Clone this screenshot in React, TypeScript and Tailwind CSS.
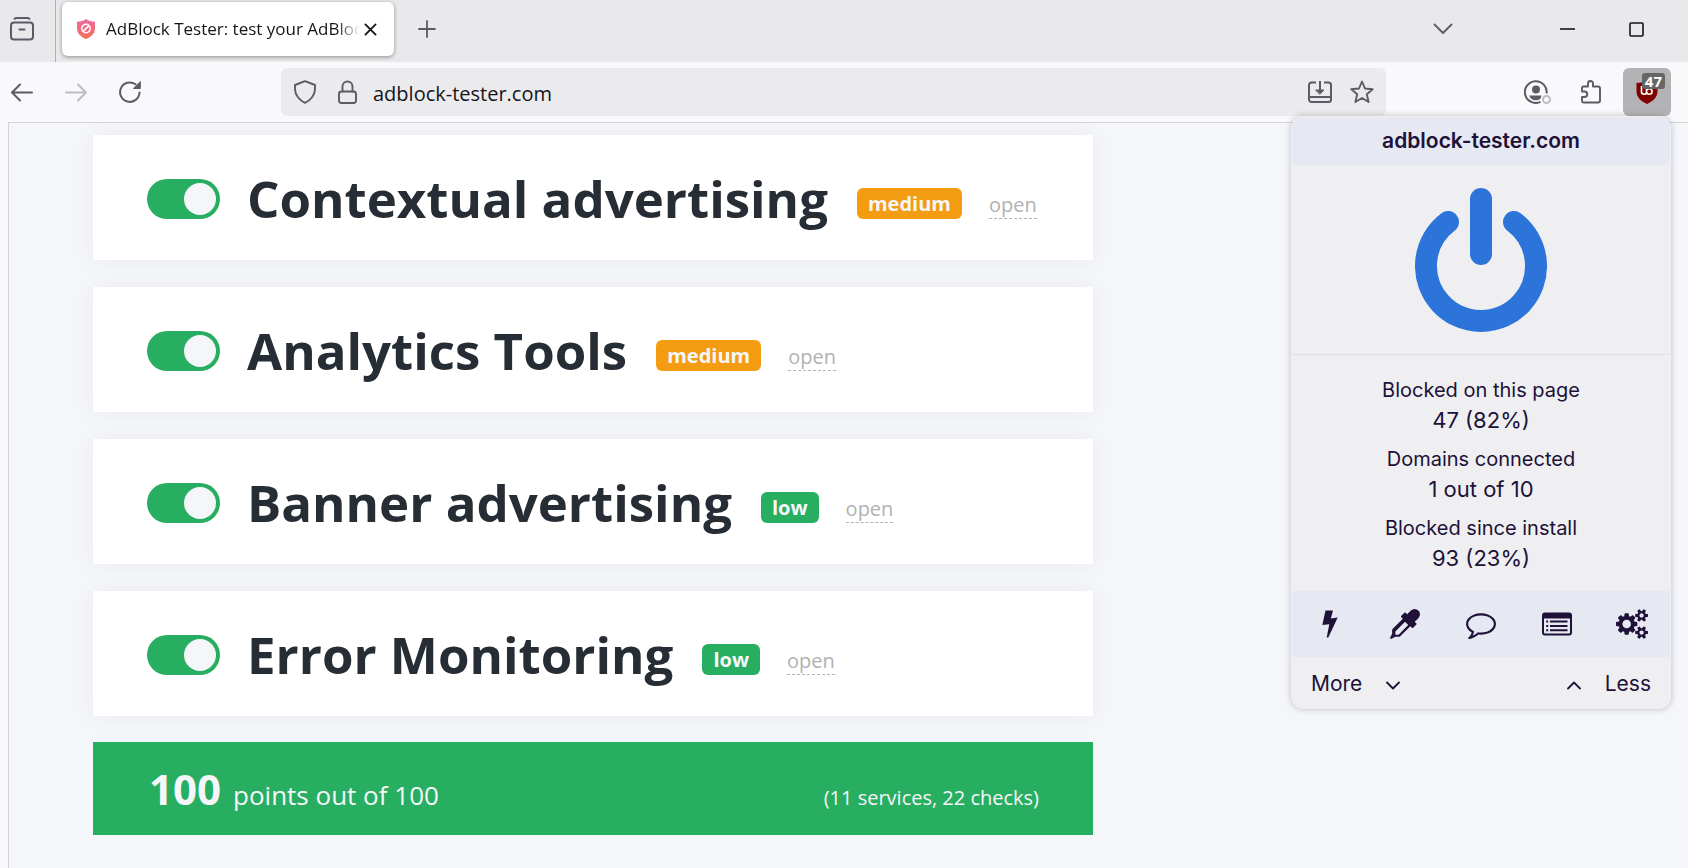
import type { ReactNode } from "react";

type Level = "medium" | "low";

const services: { id: string; title: string; level: Level }[] = [
  { id: "contextual", title: "Contextual advertising", level: "medium" },
  { id: "analytics", title: "Analytics Tools", level: "medium" },
  { id: "banner", title: "Banner advertising", level: "low" },
  { id: "errors", title: "Error Monitoring", level: "low" },
];

const levelColor: Record<Level, string> = {
  medium: "bg-[#f39c12]",
  low: "bg-[#27ae60]",
};

const stats = [
  { label: "Blocked on this page", value: "47 (82%)" },
  { label: "Domains connected", value: "1 out of 10" },
  { label: "Blocked since install", value: "93 (23%)" },
];

function Line({ children, box = "0 0 24 24", className = "size-6", width = 2 }: { children: ReactNode; box?: string; className?: string; width?: number }) {
  return (
    <svg viewBox={box} className={`shrink-0 ${className}`} fill="none" stroke="currentColor" strokeWidth={width} strokeLinecap="round" strokeLinejoin="round" aria-hidden="true">
      {children}
    </svg>
  );
}

function Solid({ d, box = "0 0 1792 1792", className = "size-[30px]" }: { d: string; box?: string; className?: string }) {
  return (
    <svg viewBox={box} className={`shrink-0 ${className}`} fill="currentColor" aria-hidden="true">
      <path d={d} />
    </svg>
  );
}

const eyedropper =
  "M1698 94q94 94 94 226.5t-94 225.5l-225 223 104 104q10 10 10 23t-10 23l-210 210q-10 10-23 10t-23-10l-105-105-603 603q-37 37-90 37h-203l-256 128-64-64 128-256v-203q0-53 37-90l603-603-105-105q-10-10-10-23t10-23l210-210q10-10 23-10t23 10l104 104 223-225q93-94 225.5-94t226.5 94zm-1186 1442l576-576-192-192-576 576v192h192z";
const comment =
  "M896 384q-204 0-381.5 69.5t-282 187.5-104.5 255q0 112 71.5 213.5t201.5 175.5l87 50-27 96q-24 91-70 172 152-63 275-171l43-38 57 6q69 8 130 8 204 0 381.5-69.5t282-187.5 104.5-255-104.5-255-282-187.5-381.5-69.5zm896 512q0 174-120 321.5t-326 233-450 85.5q-70 0-145-8-198 175-460 242-49 14-114 22h-5q-15 0-27-10.5t-16-27.5v-1q-3-4-.5-12t2-10 4.5-9.5l6-9 7-8.5 8-9q7-8 31-34.5t34.5-38 31-39.5 32.5-51 27-59 26-76q-157-89-247.5-220t-90.5-281q0-174 120-321.5t326-233 450-85.5 450 85.5 326 233 120 321.5z";
const cogs =
  "M896 896q0-106-75-181t-181-75-181 75-75 181 75 181 181 75 181-75 75-181zm768 512q0-52-38-90t-90-38-90 38-38 90q0 53 37.5 90.5t90.5 37.5 90.5-37.5 37.5-90.5zm0-1024q0-52-38-90t-90-38-90 38-38 90q0 53 37.5 90.5t90.5 37.5 90.5-37.5 37.5-90.5zm-384 421v185q0 10-7 19.5t-16 10.5l-155 24q-11 35-32 76 34 48 90 115 7 11 7 20 0 12-7 19-23 30-82.5 89.5t-78.5 59.5q-11 0-21-7l-115-90q-37 19-77 31-11 108-23 155-7 24-30 24h-186q-11 0-20-7.5t-10-17.5l-23-153q-34-10-75-31l-118 89q-7 7-20 7-11 0-21-8-144-133-144-160 0-9 7-19 10-14 41-53t47-61q-23-44-35-82l-152-24q-10-1-17-9.5t-7-19.5v-185q0-10 7-19.5t16-10.5l155-24q11-35 32-76-34-48-90-115-7-11-7-20 0-12 7-20 22-30 82-89t79-59q11 0 21 7l115 90q34-18 77-32 11-108 23-154 7-24 30-24h186q11 0 20 7.5t10 17.5l23 153q34 10 75 31l118-89q8-7 20-7 11 0 21 8 144 133 144 160 0 8-7 19-12 16-42 54t-45 60q23 48 34 82l152 23q10 2 17 10.5t7 19.5zm640 533v140q0 16-149 31-12 27-30 52 51 113 51 138 0 4-4 7-122 71-124 71-8 0-46-47t-52-68q-20 2-30 2t-30-2q-14 21-52 68t-46 47q-2 0-124-71-4-3-4-7 0-25 51-138-18-25-30-52-149-15-149-31v-140q0-16 149-31 13-29 30-52-51-113-51-138 0-4 4-7 4-2 35-20t59-34 30-16q8 0 46 46.5t52 67.5q20-2 30-2t30 2q51-71 92-112l6-2q4 0 124 70 4 3 4 7 0 25-51 138 17 23 30 52 149 15 149 31zm0-1024v140q0 16-149 31-12 27-30 52 51 113 51 138 0 4-4 7-122 71-124 71-8 0-46-47t-52-68q-20 2-30 2t-30-2q-14 21-52 68t-46 47q-2 0-124-71-4-3-4-7 0-25 51-138-18-25-30-52-149-15-149-31v-140q0-16 149-31 13-29 30-52-51-113-51-138 0-4 4-7 4-2 35-20t59-34 30-16q8 0 46 46.5t52 67.5q20-2 30-2t30 2q51-71 92-112l6-2q4 0 124 70 4 3 4 7 0 25-51 138 17 23 30 52 149 15 149 31z";

function TabStrip() {
  return (
    <header className="flex h-[62px] items-stretch bg-[#e9e9eb] text-[#5b5b66]">
      <div className="flex w-14 items-center border-r border-[#aeaeb4] pb-1 pl-[10px]">
        <button type="button" aria-label="Recent browsing">
          <Line>
            <path d="M4.500 1.800C5.200 1 6 1 7 1h10c1 0 1.800 0 2.500.8" />
            <rect x="1" y="5.500" width="22" height="17" rx="3" />
            <path d="M9.500 12.500h5" />
          </Line>
        </button>
      </div>
      <div className="flex flex-1 items-center pb-1 pl-[6px] pr-11">
        <div className="flex h-[54px] w-[332px] items-center rounded-md bg-white pl-[15px] pr-[17px] shadow-[0_1px_4px_rgba(0,0,0,0.4)]">
          <svg viewBox="0 0 18 20" className="h-5 w-[18px] shrink-0" aria-hidden="true">
            <defs>
              <linearGradient id="favicon" x1="0" y1="0" x2="0" y2="1">
                <stop offset="0" stopColor="#ec6aa0" />
                <stop offset="1" stopColor="#f4705a" />
              </linearGradient>
            </defs>
            <path d="M9 0c2.500 1.900 5.500 2.700 9 2.800v6.700c0 5-4 8.500-9 10.500C4 18 0 14.500 0 9.500V2.800C3.500 2.700 6.500 1.900 9 0z" fill="url(#favicon)" />
            <circle cx="9" cy="9.500" r="4.200" fill="none" stroke="#fff" strokeWidth="1.500" />
            <path d="M6.100 12.400l5.800-5.800" stroke="#fff" strokeWidth="1.500" />
          </svg>
          <span className="ml-[11px] min-w-0 flex-1 overflow-hidden whitespace-nowrap text-[17px] leading-6 text-[#15141a] [mask-image:linear-gradient(to_left,transparent,black_24px)]">
            AdBlock Tester: test your AdBloc
          </span>
          <button type="button" aria-label="Close tab" className="ml-1 text-[#15141a]">
            <Line box="0 0 14 14" className="size-[13px]">
              <path d="M1.500 1.500l11 11M12.500 1.500l-11 11" />
            </Line>
          </button>
        </div>
        <button type="button" aria-label="New tab" className="ml-6">
          <Line box="0 0 18 18" className="size-[18px]" width={1.8}>
            <path d="M9 1v16M1 9h16" />
          </Line>
        </button>
        <button type="button" aria-label="List all tabs" className="ml-auto mr-[107px]">
          <Line box="0 0 20 12" className="h-3 w-5" width={1.8}>
            <path d="M1.500 1.500L10 10l8.500-8.500" />
          </Line>
        </button>
        <button type="button" aria-label="Minimize" className="mr-[54px] text-[#15141a]">
          <Line box="0 0 15 15" className="size-[15px]">
            <path d="M0 7h15" strokeWidth="1.600" strokeLinecap="butt" />
          </Line>
        </button>
        <button type="button" aria-label="Maximize" className="text-[#15141a]">
          <Line box="0 0 15 15" className="size-[15px]" width={1.6}>
            <rect x="1" y="1" width="13" height="13" rx="1" />
          </Line>
        </button>
      </div>
    </header>
  );
}

function BlockerPanel() {
  return (
    <section
      aria-label="Content blocker"
      className="absolute right-0 top-full z-10 w-[380px] overflow-hidden rounded-xl border border-[#f0f0f2] bg-[#efeff1] font-['Inter',sans-serif] text-[#201139] shadow-[0_0_6px_rgba(60,60,80,0.3)]"
    >
      <h2 className="bg-[#e6e9f2] text-center text-[21px] font-semibold leading-[48px]">adblock-tester.com</h2>
      <div className="flex justify-center border-b border-[#e0e0e4] pb-[22px] pt-[23px]">
        <button type="button" aria-label="Turn blocking off for this site" className="text-[#2d74da]">
          <Line box="0 0 132 144" className="h-36 w-[132px]" width={22}>
            <path d="M66 11v55" />
            <path d="M99 34a55 55 0 1 1-66 0" />
          </Line>
        </button>
      </div>
      <dl className="flex flex-col gap-[9px] pb-[18px] pt-5 text-center leading-[30px]">
        {stats.map((s) => (
          <div key={s.label}>
            <dt className="text-[20px]">{s.label}</dt>
            <dd className="text-[22px]">{s.value}</dd>
          </div>
        ))}
      </dl>
      <div className="grid h-[66px] grid-cols-5 items-center justify-items-center bg-[#e6e9f2]">
        <button type="button" aria-label="Zap an element">
          <svg viewBox="0 0 16 28" className="h-7 w-4" fill="currentColor" aria-hidden="true">
            <path d="M3.500 0.500h7.500L8.800 8.500l6.900-1L6.300 27.500H4.700L7.300 14.200 0.300 15z" />
          </svg>
        </button>
        <button type="button" aria-label="Pick an element">
          <Solid d={eyedropper} />
        </button>
        <button type="button" aria-label="Report an issue">
          <Solid d={comment} />
        </button>
        <button type="button" aria-label="Open the logger">
          <svg viewBox="0 0 30 24" className="h-6 w-[30px]" fill="currentColor" aria-hidden="true">
            <path fillRule="evenodd" d="M3 0.500h24a3 3 0 0 1 3 3v17a3 3 0 0 1-3 3H3a3 3 0 0 1-3-3v-17a3 3 0 0 1 3-3zM2 6.500v14a1 1 0 0 0 1 1h24a1 1 0 0 0 1-1v-14z" />
            <path d="M4.200 8.500h2v2h-2zM4.200 13h2v2h-2zM4.200 17.300h2v2h-2zM8 8.500h17.500v2H8zM8 13h17.500v2H8zM8 17.300h17.500v2H8z" />
          </svg>
        </button>
        <button type="button" aria-label="Open the dashboard">
          <Solid d={cogs} box="0 0 1920 1792" className="h-[30px] w-8" />
        </button>
      </div>
      <div className="flex items-center justify-between px-[19px] pt-[2px] text-[21px] leading-[49px]">
        <button type="button" className="flex items-center gap-6">
          More
          <Line box="0 0 14 9" className="mt-1 h-[9px] w-[14px]" width={1.8}>
            <path d="M1 1.500l6 6 6-6" />
          </Line>
        </button>
        <button type="button" className="flex items-center gap-6">
          <Line box="0 0 14 9" className="mt-1 h-[9px] w-[14px]" width={1.8}>
            <path d="M1 7.500l6-6 6 6" />
          </Line>
          Less
        </button>
      </div>
    </section>
  );
}

function Toolbar() {
  return (
    <nav aria-label="Navigation" className="flex h-[60px] items-center bg-[#f9f9fb] pl-[10px] pr-[17px] text-[#5b5b66]">
      <button type="button" aria-label="Back">
        <Line>
          <path d="M22 12.500H2M10 4.500l-8 8 8 8" />
        </Line>
      </button>
      <button type="button" aria-label="Forward" disabled className="ml-[30px] text-[#bcbcc1]">
        <Line>
          <path d="M2 12.500h20M14 4.500l8 8-8 8" />
        </Line>
      </button>
      <button type="button" aria-label="Reload" className="ml-[30px]">
        <Line>
          <path d="M21.500 12.500A9.700 9.700 0 1 1 17.500 4.300" />
          <path d="M22.300 2v6.500h-6.500z" fill="currentColor" strokeWidth="1" />
        </Line>
      </button>
      <div className="ml-[139px] flex h-12 flex-1 items-center rounded-md bg-[#ebebed] pl-3 pr-3">
        <Line width={1.9}>
          <path d="M12 1.200L22 5v4c0 6-4.500 11.500-10 13.800C6.500 20.500 2 15 2 9V5z" />
        </Line>
        <Line className="ml-[18px] size-6" width={1.9}>
          <rect x="4" y="11.500" width="17" height="11.500" rx="2.500" />
          <path d="M7.500 11.500V6.500a5 5 0 0 1 10 0v5" />
        </Line>
        <input
          type="text"
          aria-label="Address"
          defaultValue="adblock-tester.com"
          className="ml-[14px] min-w-0 flex-1 bg-transparent pt-[3px] text-[20px] leading-7 text-[#15141a] outline-none"
        />
        <button type="button" aria-label="Install site">
          <Line>
            <path d="M8 2.500H3.500A2.500 2.500 0 0 0 1 5v14.500A2.500 2.500 0 0 0 3.500 22h17a2.500 2.500 0 0 0 2.500-2.500V5a2.500 2.500 0 0 0-2.500-2.500H16M1 17h22M12 1v11" strokeLinecap="butt" />
            <path d="M8 10h8l-4 4z" fill="currentColor" strokeWidth="1" />
          </Line>
        </button>
        <button type="button" aria-label="Bookmark this page" className="ml-[18px]">
          <Line width={1.9}>
            <path d="M12 1.500l3 7 7.700.7-5.900 5.100 1.800 7.700L12 18l-6.600 4 1.800-7.700-5.900-5.100 7.700-.7z" />
          </Line>
        </button>
      </div>
      <button type="button" aria-label="Account" className="ml-[138px]">
        <svg viewBox="0 0 28 24" className="h-6 w-7" aria-hidden="true">
          <path d="M22.600 13.500A10.900 10.900 0 1 0 16.500 21.900" fill="none" stroke="currentColor" strokeWidth="2" />
          <circle cx="12" cy="9.500" r="4" fill="currentColor" />
          <path d="M5 15.500h12.500l-1 3.200a8.500 8.500 0 0 1-9.500 0z" fill="currentColor" />
          <circle cx="22.500" cy="19.500" r="3.500" fill="none" stroke="#bcbcc1" strokeWidth="2" />
        </svg>
      </button>
      <button type="button" aria-label="Extensions" className="ml-7">
        <Line width={1.9}>
          <path d="M2 8.500V8a1.500 1.500 0 0 1 1.500-1.500h4.500V3.500a2.500 2.500 0 0 1 5 0v3h5A2 2 0 0 1 20 8.500v12a2 2 0 0 1-2 2H3.500A1.500 1.500 0 0 1 2 21v-4h2.500a2.700 2.700 0 0 0 0-5.500H2z" />
        </Line>
      </button>
      <div className="relative ml-[19px]">
        <button type="button" aria-label="Content blocker, 47 blocked" aria-expanded="true" className="flex size-12 items-center justify-center rounded-md bg-[#b3b3b5]">
          <svg viewBox="0 0 22 24" className="h-6 w-[22px]" aria-hidden="true">
            <path d="M11 0c3 2 6.500 3 10.500 3v8c0 6-4 10-10.500 13C4.500 21 .5 17 .5 11V3C4.500 3 8 2 11 0z" fill="#800000" />
            <path d="M5.500 6v5.800a2.500 2.500 0 0 0 5 0V8M10.500 11.500a2.800 2.800 0 1 0 5.600 0 2.800 2.800 0 1 0-5.600 0" fill="none" stroke="#fff" strokeWidth="1.600" />
          </svg>
        </button>
        <span className="absolute right-[6px] top-[5px] rounded-[3px] bg-[#666] px-[3px] text-[15px] font-bold leading-4 text-white">47</span>
        <BlockerPanel />
      </div>
    </nav>
  );
}

function ServiceCard({ id, title, level }: { id: string; title: string; level: Level }) {
  return (
    <li className="flex items-center gap-[27px] bg-white px-[54px] pb-[25px] pt-[27px] shadow-[0_0_20px_rgba(0,0,0,0.05)]">
      <input
        id={id}
        type="checkbox"
        role="switch"
        defaultChecked
        className="flex h-10 w-[73px] shrink-0 appearance-none items-center justify-end rounded-full bg-[#27ae60] pr-1 before:size-8 before:rounded-full before:bg-[#f5f6fa]"
      />
      <h2 className="whitespace-nowrap pr-[2px] text-[51px] font-bold leading-[73px] text-[#262d35]">
        <label htmlFor={id}>{title}</label>
      </h2>
      <div className="mt-[10px] flex items-center gap-[27px]">
        <span className={`rounded-md px-[11px] text-[20px] font-bold leading-[31px] text-[#f5f6fa] ${levelColor[level]}`}>{level}</span>
        <a href={`#${id}`} className="border-b border-dashed border-[#b2b2b2] pt-[3px] text-[20px] leading-[27px] text-[#b2b2b2]">
          open
        </a>
      </div>
    </li>
  );
}

export default function App() {
  return (
    <div className="flex min-h-screen flex-col bg-[#f9f9fb] font-['Open_Sans','Noto_Sans',sans-serif]">
      <TabStrip />
      <Toolbar />
      <main className="ml-2 flex-1 border-l border-t border-[#d5d5d9] bg-[#f5f6fa] pl-[84px] pr-4 pt-3">
        <ul className="flex max-w-[1000px] flex-col gap-[27px]">
          {services.map((s) => (
            <ServiceCard key={s.id} {...s} />
          ))}
        </ul>
        <div className="mt-[26px] flex max-w-[1000px] items-baseline bg-[#27ae60] pb-4 pl-14 pr-[54px] pt-[17px] text-[#f5f6fa]">
          <strong className="text-[42px] font-bold leading-[60px]">100</strong>
          <span className="ml-3 text-[26px] leading-8">points out of 100</span>
          <span className="ml-auto text-[20px] leading-8">(11 services, 22 checks)</span>
        </div>
      </main>
    </div>
  );
}
